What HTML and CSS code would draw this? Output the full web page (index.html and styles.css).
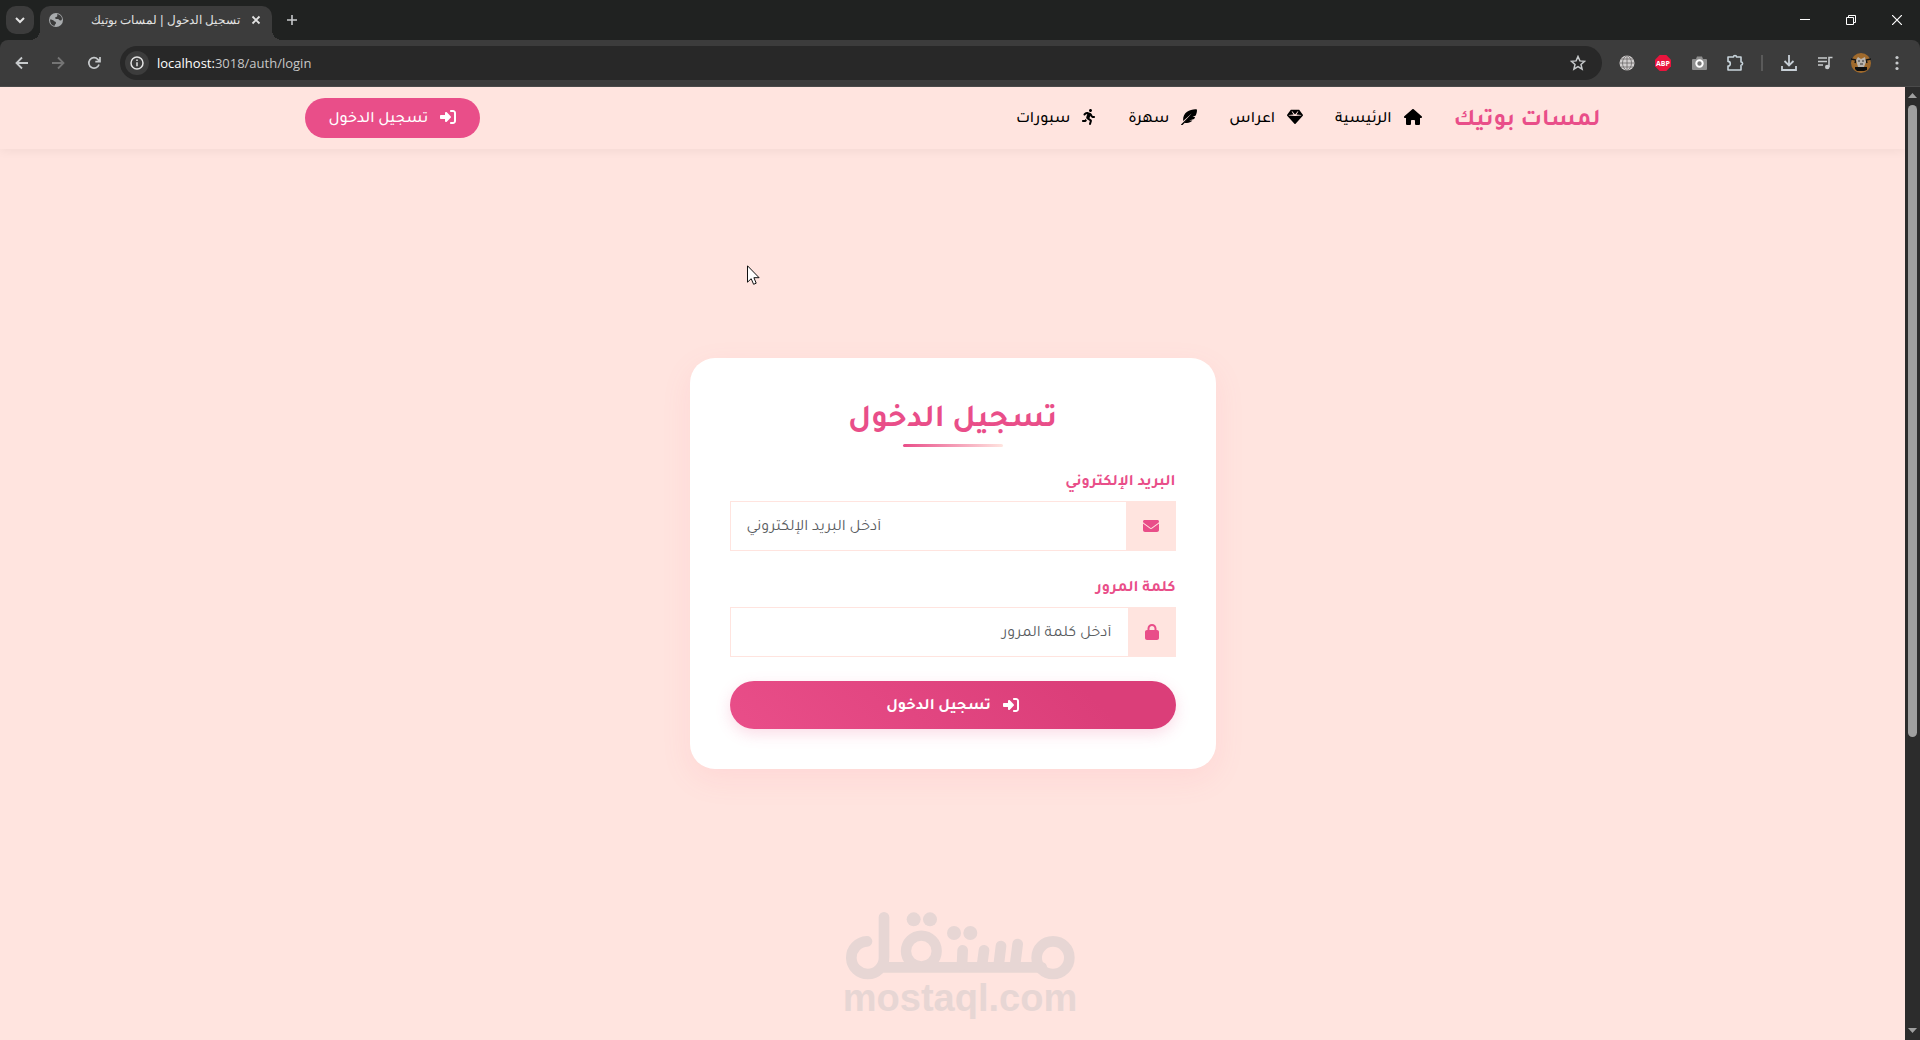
FILE: index.html
```html
<!DOCTYPE html>
<html lang="ar">
<head>
<meta charset="utf-8">
<meta name="viewport" content="width=device-width, initial-scale=1">
<title>تسجيل الدخول | لمسات بوتيك</title>
<link rel="stylesheet" href="styles.css">
</head>
<body>
<svg class="sprite" aria-hidden="true">
  <symbol id="sign-in" viewBox="0 0 512 512"><path d="M217.9 105.9L340.7 228.7c7.2 7.2 11.3 17.1 11.3 27.3s-4.1 20.1-11.3 27.3L217.9 406.1c-6.4 6.4-15 9.9-24 9.9c-18.7 0-33.9-15.2-33.9-33.9l0-62.1L32 320c-17.7 0-32-14.3-32-32l0-64c0-17.7 14.3-32 32-32l128 0 0-62.1c0-18.7 15.2-33.9 33.9-33.9c9 0 17.6 3.6 24 9.9zM352 416l64 0c17.7 0 32-14.3 32-32l0-256c0-17.7-14.3-32-32-32l-64 0c-17.7 0-32-14.3-32-32s14.3-32 32-32l64 0c53 0 96 43 96 96l0 256c0 53-43 96-96 96l-64 0c-17.7 0-32-14.3-32-32s14.3-32 32-32z"/></symbol>
</svg>

<header class="browser">
  <div class="tabstrip">
    <button class="tab-search" aria-label="Search tabs"><svg width="14" height="14" viewBox="0 0 14 14"><path d="M3 5l4 4 4-4" fill="none" stroke="#e3e3e3" stroke-width="2"/></svg></button>
    <div class="tab">
      <svg width="16" height="16" viewBox="0 0 16 16"><circle cx="8" cy="8" r="7" fill="#a8abad"/><path d="M2 7.500c2 0 3 .5 4 1.500s2 .5 2 2-1.500 1-1.500 3C3.500 13.500 2 11 2 7.500zM9.500 2c-1 1 .5 1.500-.5 2.500s-2 .5-2 1.500 2 1 3 1 1 1.500 2.500 1.500 1-1 1.500-1.500C14 4.500 12 2.500 9.500 2z" fill="#3c3c3c"/></svg>
      <span class="tab-title" dir="rtl">تسجيل الدخول | لمسات بوتيك</span>
      <button class="plain" aria-label="Close tab"><svg width="12" height="12" viewBox="0 0 12 12"><path d="M2.500 2.500l7 7M9.500 2.500l-7 7" stroke="#e3e3e3" stroke-width="1.800"/></svg></button>
    </div>
    <button class="plain new-tab" aria-label="New tab"><svg width="12" height="12" viewBox="0 0 12 12"><path d="M6 1v10M1 6h10" stroke="#c7cacc" stroke-width="1.600"/></svg></button>
    <div class="window-buttons">
      <button class="plain" aria-label="Minimize"><svg width="10" height="10" viewBox="0 0 10 10"><path d="M0 4.500h10" stroke="#fff"/></svg></button>
      <button class="plain" aria-label="Restore"><svg width="10" height="10" viewBox="0 0 10 10" fill="none" stroke="#fff"><path d="M.5 2.500h7v7h-7zM2.500 2.500v-2h7v7h-2"/></svg></button>
      <button class="plain" aria-label="Close"><svg width="10" height="10" viewBox="0 0 10 10"><path d="M0 0l10 10M10 0L0 10" stroke="#fff" stroke-width="1.200"/></svg></button>
    </div>
  </div>
  <div class="toolbar">
    <div class="nav-buttons">
      <button class="plain" aria-label="Back"><svg width="14" height="14" viewBox="0 0 14 14"><path d="M13 7H2M7 1.500L1.500 7 7 12.500" fill="none" stroke="#c7cacc" stroke-width="1.800"/></svg></button>
      <button class="plain" aria-label="Forward"><svg width="14" height="14" viewBox="0 0 14 14"><path d="M1 7h11M7 1.500L12.500 7 7 12.500" fill="none" stroke="#757575" stroke-width="1.800"/></svg></button>
      <button class="plain" aria-label="Reload"><svg width="14" height="14" viewBox="0 0 14 14"><path d="M12 8.500A5.200 5.200 0 1 1 10.800 3.300L12.500 5M13 1v4.700H8.300" fill="none" stroke="#c7cacc" stroke-width="1.700"/></svg></button>
    </div>
    <div class="omnibox">
      <span class="site-info"><svg width="14" height="14" viewBox="0 0 14 14"><circle cx="7" cy="7" r="6" fill="none" stroke="#e3e3e3" stroke-width="1.500"/><path d="M7 6.200v4M7 3.600v1.500" stroke="#e3e3e3" stroke-width="1.500"/></svg></span>
      <span class="url"><b>localhost:</b>3018/auth/login</span>
      <button class="plain" aria-label="Bookmark"><svg width="16" height="16" viewBox="0 0 16 16"><path d="M8 1.500l1.900 4.400 4.700.4-3.600 3.100 1.100 4.700L8 11.600l-4.100 2.500L5 9.400 1.400 6.300l4.700-.4z" fill="none" stroke="#c7cacc" stroke-width="1.500"/></svg></button>
    </div>
    <div class="extensions">
      <button class="plain" aria-label="Globe"><svg width="16" height="16" viewBox="0 0 16 16"><circle cx="8" cy="8" r="7.500" fill="#d2cfcf"/><path d="M1 8h14M2 4h12M2 12h12M8 0v16M8 0C2 4 2 12 8 16M8 0c6 4 6 12 0 16" fill="none" stroke="#6a6868" stroke-width=".8"/></svg></button>
      <button class="plain" aria-label="Adblock Plus"><svg width="16" height="16" viewBox="0 0 16 16"><path d="M4.700 0h6.600L16 4.700v6.600L11.300 16H4.700L0 11.300V4.700z" fill="#e9143d"/><text class="abp" x="8" y="10.500" text-anchor="middle">ABP</text></svg></button>
      <button class="plain" aria-label="Screenshot"><svg width="16" height="16" viewBox="0 0 16 16"><rect x="1" y="4" width="15" height="11" rx="1" fill="#8f8f8f"/><path d="M5 4l1-2.500h5L12 4z" fill="#8f8f8f"/><circle cx="8.500" cy="8.500" r="3.200" fill="#777" stroke="#fff" stroke-width="2"/></svg></button>
      <button class="plain" aria-label="Extensions"><svg width="18" height="18" viewBox="0 0 18 18"><path d="M2 3h5.500a1.500 1.500 0 0 1 3 0H15v5a1.500 1.500 0 0 1 0 3.200V16H2v-4a2.300 2.300 0 0 0 0-4.600z" fill="none" stroke="#c7d3da" stroke-width="1.600" stroke-linejoin="round"/></svg></button>
      <span class="divider"></span>
      <button class="plain" aria-label="Downloads"><svg width="18" height="18" viewBox="0 0 18 18"><path d="M9 1v10M4.500 7L9 11.500 13.500 7M2 12v4h14v-4" fill="none" stroke="#c7cfd6" stroke-width="1.800"/></svg></button>
      <button class="plain" aria-label="Media"><svg width="18" height="18" viewBox="0 0 18 18"><path d="M2 4h9M2 7.500h9M2 11h5M13 13V3.500h3.500" fill="none" stroke="#c7cacc" stroke-width="1.600"/><circle cx="11.300" cy="13" r="2.300" fill="#c7cacc"/></svg></button>
      <button class="plain" aria-label="Profile"><svg width="20" height="20" viewBox="0 0 20 20"><circle cx="10" cy="10" r="10" fill="#a06a2c"/><path d="M0 6l5 1-1 3M20 6l-5 1 1 3" fill="none" stroke="#141414" stroke-width="1.500"/><path d="M5 7l2-3 3 2 4-2 1 5-2 5H7z" fill="#b9b4ae"/><path d="M7 8h2M11 8h2M9 11h3" stroke="#333"/><path d="M4 14h12v3l-3 1H6l-2-2z" fill="#0e0e0e"/></svg></button>
      <button class="plain" aria-label="Menu"><svg width="16" height="16" viewBox="0 0 16 16" fill="#c7cacc"><circle cx="8" cy="2.500" r="1.600"/><circle cx="8" cy="8" r="1.600"/><circle cx="8" cy="13.500" r="1.600"/></svg></button>
    </div>
  </div>
</header>

<div class="viewport">
  <div class="page" dir="rtl">
    <nav class="navbar">
      <div class="container">
        <a class="brand" href="#">لمسات بوتيك</a>
        <ul class="links">
          <li><a href="#"><svg width="18" height="16" viewBox="0 0 576 512"><path d="M575.8 255.5c0 18-15 32.1-32 32.1h-32l.7 160.2c0 2.700-.2 5.400-.5 8.100V472c0 22.100-17.900 40-40 40H392c-22.100 0-40-17.900-40-40V384c0-17.700-14.300-32-32-32H256c-17.700 0-32 14.300-32 32v88c0 22.100-17.900 40-40 40H104c-22.100 0-40-17.900-40-40V287.600H32c-18 0-32-14-32-32.100c0-9 3-17 10-24L266.400 8c7-7 15-8 22-8s15 2 21 7L564.800 231.500c8 7 12 15 11 24z"/></svg><span>الرئيسية</span></a></li>
          <li><a href="#"><svg width="16" height="16" viewBox="0 0 512 512"><path d="M116.700 33.800c4.500-6.100 11.700-9.800 19.300-9.800H376c7.600 0 14.800 3.600 19.300 9.800l112 152c6.800 9.200 6.100 21.900-1.500 30.400l-232 256c-4.500 5-11 7.900-17.800 7.900s-13.200-2.900-17.800-7.900l-232-256c-7.700-8.500-8.300-21.200-1.500-30.400l112-152zm38.500 39.800c-3.300 2.500-4.200 7-2.100 10.500l57.400 95.600L63.300 192c-4.100 .3-7.300 3.800-7.300 8s3.200 7.600 7.300 8l192 16c.4 0 .9 0 1.300 0l192-16c4.100-.3 7.300-3.800 7.300-8s-3.200-7.600-7.300-8L301.500 179.800l57.400-95.600c2.100-3.500 1.200-8.100-2.100-10.500s-7.900-2-10.700 1L256 172.200 165.900 74.600c-2.800-3-7.400-3.400-10.700-1z"/></svg><span>اعراس</span></a></li>
          <li><a href="#"><svg width="16" height="16" viewBox="0 0 512 512"><path d="M27 501L400 128" stroke="#000" stroke-width="46" stroke-linecap="round"/><path d="M508 12C430-6 285 22 195 88C105 154 62 235 66 385L345 145L140 405L112 448C200 450 265 445 330 400C348 387 360 372 362 365H262L420 316C432 300 445 280 450 256H370L472 208C500 145 518 65 508 12z"/></svg><span>سهرة</span></a></li>
          <li><a href="#"><svg width="14" height="16" viewBox="0 0 448 512"><path d="M320 48c0-26.500-21.500-48-48-48s-48 21.500-48 48s21.500 48 48 48s48-21.500 48-48zM125.700 175.500c9.900-9.900 23.400-15.500 37.500-15.500c1.900 0 3.800 .1 5.600 .3L137.600 254c-9.300 28 1.700 58.800 26.800 74.500l86.200 53.900-25.400 88.800c-4.900 17 5 34.700 22 39.600s34.700-5 39.600-22l28.700-100.400c5.900-20.600-2.600-42.600-20.700-53.900L238 299l30.900-82.400 5.100 12.300C289 264.700 323.900 288 362.700 288H384c17.700 0 32-14.300 32-32s-14.300-32-32-32H362.700c-12.900 0-24.600-7.800-29.500-19.700l-6.300-15c-14.600-35.100-44.100-61.900-80.500-73.100l-48.700-15c-11.100-3.400-22.700-5.200-34.400-5.200c-31 0-60.800 12.300-82.700 34.300L57.400 153.400c-12.500 12.500-12.500 32.800 0 45.300s32.800 12.500 45.300 0l23.100-23.100zM91.200 352H32c-17.700 0-32 14.300-32 32s14.300 32 32 32h69.600c19 0 36.200-11.200 43.900-28.500L157 361.600l-9.500-6c-17.500-10.900-30.500-26.800-37.900-44.900L91.200 352z"/></svg><span>سبورات</span></a></li>
        </ul>
        <button class="login-link" type="button"><svg width="16" height="16"><use href="#sign-in"/></svg><span>تسجيل الدخول</span></button>
      </div>
    </nav>
    <main class="content">
      <form class="card">
        <h1>تسجيل الدخول</h1>
        <div class="field">
          <label for="email">البريد الإلكتروني</label>
          <div class="group">
            <span class="addon"><svg width="16" height="16" viewBox="0 0 512 512"><path d="M48 64C21.500 64 0 85.500 0 112c0 15.100 7.100 29.300 19.200 38.400L236.800 313.600c11.400 8.500 27 8.500 38.400 0L492.800 150.400c12.100-9.100 19.200-23.300 19.200-38.400c0-26.500-21.500-48-48-48H48zM0 176V384c0 35.300 28.700 64 64 64H448c35.300 0 64-28.700 64-64V176L294.400 339.200c-22.800 17.100-54 17.100-76.800 0L0 176z"/></svg></span>
            <input id="email" type="email" dir="ltr" placeholder="أدخل البريد الإلكتروني">
          </div>
        </div>
        <div class="field">
          <label for="password">كلمة المرور</label>
          <div class="group">
            <span class="addon"><svg width="14" height="16" viewBox="0 0 448 512"><path d="M144 144v48H304V144c0-44.200-35.800-80-80-80s-80 35.800-80 80zM80 192V144C80 64.500 144.500 0 224 0s144 64.500 144 144v48h16c35.300 0 64 28.700 64 64V448c0 35.300-28.700 64-64 64H64c-35.300 0-64-28.700-64-64V256c0-35.300 28.700-64 64-64H80z"/></svg></span>
            <input id="password" type="password" placeholder="أدخل كلمة المرور">
          </div>
        </div>
        <button class="submit" type="submit"><svg width="16" height="16"><use href="#sign-in"/></svg><span>تسجيل الدخول</span></button>
      </form>
    </main>
  </div>
  <div class="scrollbar" aria-hidden="true">
    <svg width="9" height="5" viewBox="0 0 9 5"><path d="M4.500 0L9 5H0z"/></svg>
    <div class="track"><div class="thumb"></div></div>
    <svg width="9" height="5" viewBox="0 0 9 5"><path d="M4.500 5L0 0h9z"/></svg>
  </div>
  <svg class="cursor" width="14" height="21" viewBox="0 0 14 21"><path d="M.5.8v16.400l3.700-3.500 2.400 5.600 2.600-1.100-2.300-5.500h5.200z" fill="#fff" stroke="#111"/></svg>
  <div class="watermark" dir="ltr">
    <svg width="230" height="68" viewBox="75 69 690 204" fill="none" stroke="currentColor" stroke-width="32" stroke-linecap="round" role="img" aria-label="مستقل">
      <circle cx="699" cy="206" r="49"/>
      <path d="M141 157a49 49 0 1 0 51 49V85M185 235H665" />
      <circle cx="304" cy="186" r="46" stroke-width="31"/>
      <path d="M428 184l-2 45M492 184l-6 45M543 171l-7 58M593 165l-8 64"/>
      <g fill="currentColor" stroke="none"><circle cx="281" cy="91" r="21"/><circle cx="330" cy="91" r="21"/><circle cx="402" cy="132" r="21"/><circle cx="451" cy="132" r="21"/></g>
    </svg>
    <span>mostaql.com</span>
  </div>
</div>
</body>
</html>
```
FILE: styles.css
```css
:root {
  --pink: #e94e89;
  --blush: #ffe4df;
}

* { box-sizing: border-box; }

body {
  margin: 0;
  min-height: 100vh;
  display: flex;
  flex-direction: column;
  font-family: Tajawal, "Noto Sans", sans-serif;
  background: var(--blush);
}

.sprite { position: absolute; width: 0; height: 0; }

svg { display: block; flex: none; }

button { font: inherit; border: 0; padding: 0; cursor: pointer; }

.plain {
  display: flex;
  align-items: center;
  justify-content: center;
  background: none;
}

/* Browser frame */
.browser { background: #202221; border-bottom: 1px solid #4b4b4b; }

.tabstrip {
  display: flex;
  align-items: flex-start;
  height: 40px;
  padding: 6px 0 0 6px;
}

.tab-search {
  display: flex;
  align-items: center;
  justify-content: center;
  width: 28px;
  height: 28px;
  border-radius: 10px;
  background: #3c3c3c;
}

.tab {
  position: relative;
  display: flex;
  align-items: center;
  width: 232px;
  height: 34px;
  margin-left: 6px;
  padding: 0 10px 6px 8px;
  border-radius: 10px 10px 0 0;
  background: #3c3c3c;
}

.tab::before,
.tab::after {
  content: "";
  position: absolute;
  bottom: 0;
  width: 10px;
  height: 10px;
}

.tab::before { right: 100%; background: radial-gradient(circle at 0 0, transparent 10px, #3c3c3c 10px); }
.tab::after { left: 100%; background: radial-gradient(circle at 100% 0, transparent 10px, #3c3c3c 10px); }

.tab-title {
  flex: 1;
  margin-right: 10px;
  font: 12px/16px "Liberation Sans", Arial, sans-serif;
  color: #e3e3e3;
  white-space: nowrap;
}

.new-tab { width: 28px; height: 28px; margin-left: 6px; }

.window-buttons { display: flex; margin-left: auto; }
.window-buttons .plain { width: 46px; height: 28px; }

.toolbar {
  display: flex;
  align-items: center;
  height: 46px;
  background: #3c3c3c;
  border-radius: 8px 8px 0 0;
}

.nav-buttons { display: flex; padding: 0 8px 0 4px; }
.nav-buttons .plain { width: 36px; height: 34px; }

.omnibox {
  flex: 1;
  display: flex;
  align-items: center;
  height: 34px;
  padding: 0 16px 0 5px;
  border-radius: 17px;
  background: #282828;
}

.site-info {
  display: flex;
  align-items: center;
  justify-content: center;
  width: 24px;
  height: 24px;
  border-radius: 50%;
  background: #3c3c3c;
}

.url {
  flex: 1;
  margin-left: 8px;
  font: 13px/20px "Open Sans", sans-serif;
  color: #c7c7c7;
}

.url b { font-weight: 400; color: #fff; }

.extensions { display: flex; align-items: center; padding: 0 5px 0 7px; }
.extensions .plain { width: 36px; height: 34px; }
.divider { width: 2px; height: 16px; margin: 0 8px; background: #5a5a5a; }
.abp { font: 700 7px "Open Sans", sans-serif; fill: #fff; }

/* Page area */
.viewport { position: relative; flex: 1; display: flex; }

.page { flex: 1; display: flex; flex-direction: column; }

.scrollbar {
  display: flex;
  flex-direction: column;
  align-items: center;
  width: 15px;
  padding: 6px 0 7px;
  background: #2c2c2c;
  fill: #9f9f9f;
}

.track { flex: 1; padding: 7px 0; }
.thumb { width: 9px; height: 69%; border-radius: 5px; background: #9f9f9f; }

.navbar { box-shadow: 0 2px 10px rgba(0, 0, 0, .05); }

.container {
  display: flex;
  align-items: center;
  width: 100%;
  max-width: 1320px;
  height: 62px;
  margin: 0 auto;
  padding: 0 12px;
}

.brand {
  margin-left: 24px;
  padding-top: 8px;
  font-size: 24px;
  font-weight: 700;
  line-height: 36px;
  color: var(--pink);
  text-decoration: none;
}

.links { display: flex; margin: 0; padding: 0; list-style: none; }

.links a {
  display: flex;
  align-items: center;
  gap: 12px;
  padding: 8px;
  margin-left: 16px;
  font-size: 16px;
  font-weight: 500;
  line-height: 24px;
  color: #000;
  text-decoration: none;
}

.links svg,
.login-link svg { margin-bottom: 2px; }

/* Tajawal sits high in its line box, so text beside an icon is eased down */
.links span,
.login-link span,
.submit span { padding-top: 4px; }

.login-link {
  display: flex;
  align-items: center;
  gap: 12px;
  height: 40px;
  margin-right: auto;
  padding: 0 24px;
  border-radius: 20px;
  background: var(--pink);
  color: #fff;
  fill: #fff;
  font-weight: 500;
  font-size: 16px;
}

.content {
  flex: 1;
  display: flex;
  align-items: flex-start;
  justify-content: center;
  padding: 209px 16px 0;
}

.card {
  width: 100%;
  max-width: 526px;
  padding: 40px;
  border-radius: 25px;
  background: #fff;
  box-shadow: 0 10px 30px rgba(255, 105, 135, .1);
}

h1 {
  margin: 0 0 22px;
  font-size: 32px;
  font-weight: 700;
  line-height: 46px;
  text-align: center;
  color: var(--pink);
}

h1::after {
  content: "";
  display: block;
  width: 100px;
  height: 3px;
  margin: 0 auto;
  border-radius: 2px;
  background: linear-gradient(90deg, var(--pink), var(--blush));
}

.field { margin-bottom: 24px; }

label {
  display: block;
  margin-bottom: 8px;
  padding-top: 4px;
  font-size: 16px;
  font-weight: 700;
  line-height: 20px;
  color: var(--pink);
}

.group { display: flex; height: 50px; }

.addon {
  display: flex;
  align-items: center;
  padding: 0 16px;
  border: 1px solid var(--blush);
  background: var(--blush);
  fill: var(--pink);
}

input {
  flex: 1;
  min-width: 0;
  margin-right: -1px;
  padding: 4px 16px 0;
  border: 1px solid var(--blush);
  background: #fff;
  font: 16px/24px Tajawal, "Noto Sans", sans-serif;
  color: #212529;
}

input::placeholder { color: #595c5f; }

.submit {
  display: flex;
  align-items: center;
  justify-content: center;
  gap: 12px;
  width: 100%;
  height: 48px;
  border-radius: 24px;
  background: linear-gradient(45deg, var(--pink), #db3e79 80%);
  box-shadow: 0 5px 15px rgba(233, 78, 137, .2);
  color: #fff;
  fill: #fff;
  font-size: 16px;
  font-weight: 700;
}

/* Overlays */
.cursor { position: absolute; left: 747px; top: 178px; }

.watermark {
  position: absolute;
  left: 0;
  right: 0;
  bottom: 24px;
  display: flex;
  flex-direction: column;
  align-items: center;
  color: #e7d6d4;
  font: 700 38px/36px "Liberation Sans", Arial, sans-serif;
  pointer-events: none;
}
```
